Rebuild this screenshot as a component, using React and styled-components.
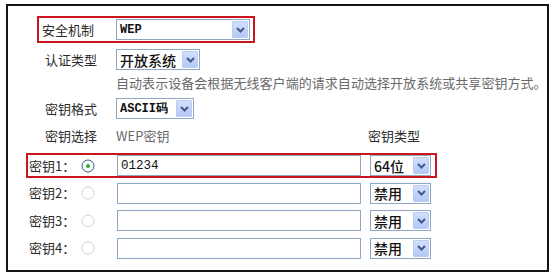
import React from "react";
import styled, { createGlobalStyle } from "styled-components";

const Global = createGlobalStyle`
  html, body { margin: 0; padding: 0; background: #fff; }
  body { font-family: "Noto Sans CJK SC", "Noto Sans", sans-serif; color: #333; }
`;

const Panel = styled.div`
  box-sizing: border-box;
  margin: 4px 0 0 6px;
  width: 543px;
  height: 268px;
  border: 2px solid #141414;
  display: flex;
  flex-direction: column;
`;

const Highlight = styled.div`
  box-sizing: border-box;
  display: flex;
  align-items: center;
  border: 2px solid ${(p) => (p.$on ? "#c9151e" : "transparent")};
`;

const SecurityBox = styled(Highlight)`
  margin: 10px 0 0 29px;
  width: 218px;
  height: 27px;
  padding-left: 3px;
`;

const FieldRow = styled.div`
  display: flex;
  align-items: center;
  margin: ${(p) => p.$top || 0}px 0 0 37px;
  height: ${(p) => p.$h || 21}px;
`;

const Label = styled.span`
  display: inline-block;
  width: ${(p) => p.$w || 71}px;
  flex-shrink: 0;
  font-size: 13px;
  line-height: 16px;
  color: #2b2b2b;
  white-space: nowrap;
`;

const Hint = styled.span`
  font-size: 13px;
  line-height: 16px;
  color: #6a6a6a;
  white-space: nowrap;
  letter-spacing: 0.05px;
  width: ${(p) => (p.$w ? p.$w + "px" : "auto")};
  flex-shrink: 0;
  display: inline-block;
`;

const SelectBox = styled.div`
  box-sizing: border-box;
  position: relative;
  width: ${(p) => p.$w}px;
  height: ${(p) => p.$h || 21}px;
  border: 1px solid #8fa6c4;
  background: #fff;
  display: flex;
  align-items: center;
  padding-left: 3px;
  flex-shrink: 0;
`;

const SelectText = styled.span`
  font-family: ${(p) =>
    p.$mono ? '"Liberation Mono", monospace' : '"Noto Sans CJK SC", sans-serif'};
  font-weight: ${(p) => (p.$mono ? 700 : 500)};
  font-size: ${(p) => (p.$mono ? 12 : 14)}px;
  line-height: 16px;
  color: #111;
  white-space: nowrap;
`;

const ArrowBtn = styled.span`
  position: absolute;
  right: 1px;
  top: 1px;
  bottom: 1px;
  width: 16px;
  box-sizing: border-box;
  border: 1px solid #bccdf3;
  border-radius: 1px;
  background: linear-gradient(#d3e0fd, #b4c8f6);
  display: flex;
  align-items: center;
  justify-content: center;
`;

const Select = ({ w, h, mono, children }) => (
  <SelectBox $w={w} $h={h}>
    <SelectText $mono={mono}>{children}</SelectText>
    <ArrowBtn>
      <svg width="9" height="6" viewBox="0 0 9 6">
        <path d="M1 1 L4.5 4.5 L8 1" fill="none" stroke="#3e5a8c" strokeWidth="2" />
      </svg>
    </ArrowBtn>
  </SelectBox>
);

const KeySection = styled.div`
  display: flex;
  flex-direction: column;
  gap: 2.5px;
  margin: 5px 0 0 18px;
`;

const KeyRow = styled(Highlight)`
  width: 411px;
  height: 25px;
  padding-left: 1px;
`;

const KeyLabel = styled.span`
  width: 52px;
  font-size: 13px;
  line-height: 16px;
  color: #2b2b2b;
  white-space: nowrap;
`;

const RadioWrap = styled.span`
  width: 14px;
  height: 14px;
  margin-right: 22px;
  display: flex;
`;

const KeyInput = styled.div`
  box-sizing: border-box;
  width: 244px;
  height: 21px;
  border: 1px solid #8fa6c4;
  margin-right: 9px;
  padding-left: 3px;
  display: flex;
  align-items: center;
  font-family: "Liberation Mono", monospace;
  font-size: 12.5px;
  color: #111;
`;

const Radio = ({ on }) => (
  <RadioWrap>
    <svg width="14" height="14" viewBox="0 0 14 14">
      <circle cx="7" cy="7" r="6" fill="#fff" stroke={on ? "#2c5a86" : "#cfd3d8"} strokeWidth="1" />
      {on && <circle cx="7" cy="7" r="2" fill="#2fa83a" />}
    </svg>
  </RadioWrap>
);

const keys = [
  { n: 1, v: "01234", t: "64位", on: true },
  { n: 2, v: "", t: "禁用" },
  { n: 3, v: "", t: "禁用" },
  { n: 4, v: "", t: "禁用" },
];

export default function App() {
  return (
    <>
      <Global />
      <Panel>
        <SecurityBox $on>
          <Label $w={74}>安全机制</Label>
          <Select w={134} mono>WEP</Select>
        </SecurityBox>
        <FieldRow $top={6}>
          <Label>认证类型</Label>
          <Select w={84}>开放系统</Select>
        </FieldRow>
        <FieldRow $top={2} $h={22}>
          <Label />
          <Hint>自动表示设备会根据无线客户端的请求自动选择开放系统或共享密钥方式。</Hint>
        </FieldRow>
        <FieldRow $top={4}>
          <Label>密钥格式</Label>
          <Select w={78} mono>ASCII码</Select>
        </FieldRow>
        <FieldRow $top={5} $h={24}>
          <Label>密钥选择</Label>
          <Hint $w={252}>WEP密钥</Hint>
          <Label>密钥类型</Label>
        </FieldRow>
        <KeySection>
          {keys.map((k) => (
            <KeyRow key={k.n} $on={k.on}>
              <KeyLabel>密钥{k.n}：</KeyLabel>
              <Radio on={k.on} />
              <KeyInput>{k.v}</KeyInput>
              <Select w={61}>{k.t}</Select>
            </KeyRow>
          ))}
        </KeySection>
      </Panel>
    </>
  );
}
